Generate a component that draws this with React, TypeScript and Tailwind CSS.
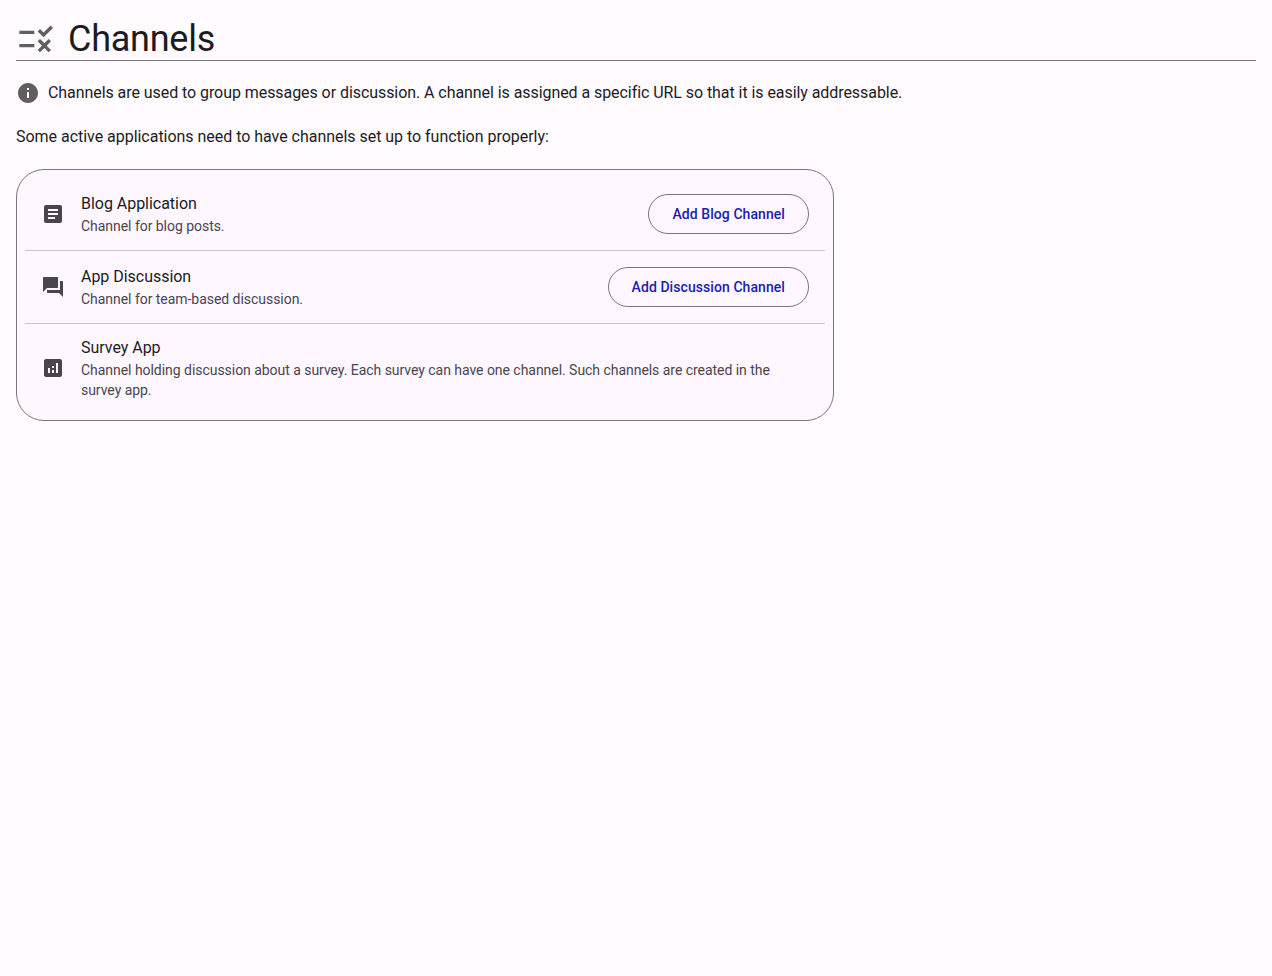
const RULE =
  "M16.54 11 13 7.46l1.41-1.41 2.12 2.12 4.24-4.24 1.41 1.41L16.54 11zM11 7H2v2h9V7zm10 6.41L19.59 12 17 14.59 14.41 12 13 13.41 15.59 16 13 18.59 14.41 20 17 17.41 19.59 20 21 18.59 18.41 16 21 13.41zM11 15H2v2h9v-2z";
const INFO =
  "M12 2C6.48 2 2 6.48 2 12s4.48 10 10 10 10-4.48 10-10S17.52 2 12 2zm1 15h-2v-6h2v6zm0-8h-2V7h2v2z";
const ARTICLE =
  "M19 3H5c-1.1 0-2 .9-2 2v14c0 1.1.9 2 2 2h14c1.1 0 2-.9 2-2V5c0-1.1-.9-2-2-2zm-5 14H7v-2h7v2zm3-4H7v-2h10v2zm0-4H7V7h10v2z";
const FORUM =
  "M21 6h-2v9H6v2c0 .55.45 1 1 1h11l4 4V7c0-.55-.45-1-1-1zm-4 6V3c0-.55-.45-1-1-1H3c-.55 0-1 .45-1 1v14l4-4h10c.55 0 1-.45 1-1z";
const ANALYTICS =
  "M19 3H5c-1.1 0-2 .9-2 2v14c0 1.1.9 2 2 2h14c1.1 0 2-.9 2-2V5c0-1.1-.9-2-2-2zM9 17H7v-5h2v5zm8 0h-2V7h2v10zm-4 0h-2v-3h2v3zm0-5h-2v-2h2v2z";

function Icon({ d, className }: { d: string; className: string }) {
  return (
    <svg viewBox="0 0 24 24" fill="currentColor" className={className}>
      <path d={d} />
    </svg>
  );
}

function Row({
  icon,
  title,
  sub,
  action,
  className,
}: {
  icon: string;
  title: string;
  sub: string;
  action?: string;
  className: string;
}) {
  return (
    <div className={`flex items-center pl-[16px] pr-[16px] ${className}`}>
      <Icon d={icon} className="w-6 h-6 shrink-0 text-[#49454f]" />
      <div className="ml-[16px] flex-1 min-w-0">
        <div className="text-[16px] leading-[24px] tracking-[-0.03px] text-[#1c1b1f]">{title}</div>
        <div className="text-[14px] leading-[20px] tracking-[-0.04px] text-[#49454f]">{sub}</div>
      </div>
      {action && (
        <button className="h-[40px] px-[23px] shrink-0 rounded-full border border-[#79747e] text-[14px] font-medium tracking-[0.07px] text-[#1c1cb0]">
          {action}
        </button>
      )}
    </div>
  );
}

export default function App() {
  return (
    <div className="min-h-[976px] bg-[#fffbff] p-4 font-['Roboto',sans-serif] text-[#1c1b1f]">
      <div className="flex items-center h-[45px] pt-[2px] border-b border-[#79747e]">
        <Icon d={RULE} className="w-10 h-10 text-[#5f5f5f]" />
        <h1 className="ml-[12px] text-[36px] leading-[44px] font-normal tracking-[-0.25px]">Channels</h1>
      </div>
      <div className="flex items-center gap-2 mt-[20px] h-6">
        <Icon d={INFO} className="w-6 h-6 text-[#5f5f5f]" />
        <p className="text-[16px] leading-[24px] tracking-[-0.065px]">
          Channels are used to group messages or discussion. A channel is assigned a specific URL so that it is easily addressable.
        </p>
      </div>
      <p className="mt-[20px] text-[16px] leading-[24px] tracking-[-0.03px]">
        Some active applications need to have channels set up to function properly:
      </p>
      <div className="mt-[20px] w-[818px] rounded-[28px] border border-[#79747e] bg-[#fef7ff] px-2 py-2">
        <Row icon={ARTICLE} title="Blog Application" sub="Channel for blog posts." action="Add Blog Channel" className="h-[72px]" />
        <div className="border-t border-[#cac4d0]" />
        <Row icon={FORUM} title="App Discussion" sub="Channel for team-based discussion." action="Add Discussion Channel" className="h-[72px]" />
        <div className="border-t border-[#cac4d0]" />
        <Row
          icon={ANALYTICS}
          title="Survey App"
          sub="Channel holding discussion about a survey. Each survey can have one channel. Such channels are created in the survey app."
          className="h-[88px]"
        />
      </div>
    </div>
  );
}
